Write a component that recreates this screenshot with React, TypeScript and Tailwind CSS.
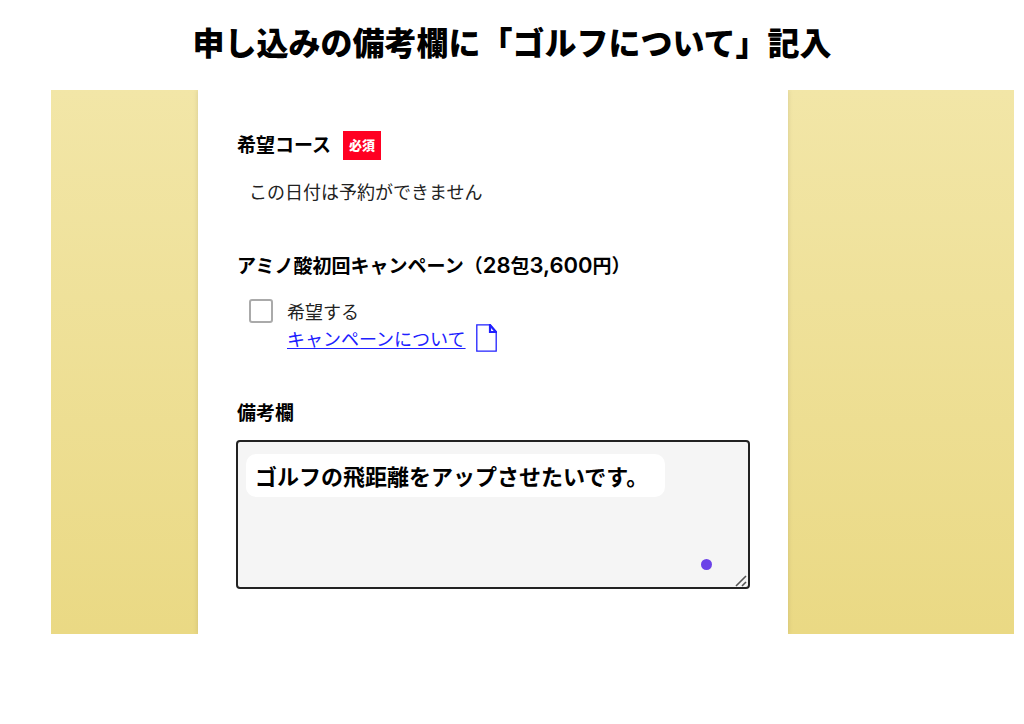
import { useState } from "react";

export default function App() {
  const [wantsCampaign, setWantsCampaign] = useState(false);
  const [remarks, setRemarks] = useState("ゴルフの飛距離をアップさせたいです。");

  return (
    <main className="min-h-screen bg-white pt-[22px] pr-[10px] pb-[90px] pl-[51px] font-['Noto_Sans_CJK_JP',sans-serif] text-black">
      <h1 className="mr-[41px] text-center text-[32px] leading-[38px] font-black">
        申し込みの備考欄に「ゴルフについて」記入
      </h1>

      <div className="mt-[30px] grid grid-cols-[147fr_590fr_226fr] overflow-hidden bg-linear-to-b from-[#f2e6a7] to-[#ead984]">
        <form className="col-start-2 bg-white px-[38px] pt-[41px] pb-[45px] shadow-[0_0_5px_rgba(0,0,0,0.12)]">
          {/* Course */}
          <section className="px-px">
            <div className="flex items-start gap-3">
              <h2 className="text-[19px] leading-[26px] font-bold">希望コース</h2>
              <span className="bg-[#ff0022] px-[6px] pb-[2px] text-[13px] leading-[27px] font-black text-white">
                必須
              </span>
            </div>
            <p className="mt-[17px] pl-3 text-[18px] leading-7 text-[#222]">
              この日付は予約ができません
            </p>
          </section>

          {/* Campaign */}
          <section className="mt-[45px] px-px">
            <h2 className="text-[19px] leading-[30px] font-bold whitespace-nowrap">
              アミノ酸初回キャンペーン（
              <span className="font-['Inter',sans-serif] text-[22px] font-semibold">28</span>包
              <span className="font-['Inter',sans-serif] text-[22px] font-semibold">3,600</span>円）
            </h2>
            <div className="mt-[18px] flex gap-[14px] pl-3">
              <input
                id="campaign"
                type="checkbox"
                checked={wantsCampaign}
                onChange={(e) => setWantsCampaign(e.target.checked)}
                className="mt-[1px] h-6 w-6 shrink-0 appearance-none rounded-[3px] border-2 border-[#aaa] bg-white checked:bg-blue-600"
              />
              <div className="text-[18px] leading-[26px]">
                <label htmlFor="campaign" className="block text-[#222]">
                  希望する
                </label>
                <a
                  href="#campaign"
                  className="flex items-center gap-[10px] text-[#2020ff] underline decoration-1 underline-offset-2"
                >
                  キャンペーンについて
                  <svg width="21" height="28" viewBox="0 0 21 28" fill="none" stroke="#2020ff">
                    <path d="M0.8 0.8H14L20.2 8V27.2H0.8Z" strokeWidth="1.3" />
                    <path d="M14 1V8H20Z" strokeWidth="2.2" />
                  </svg>
                </a>
              </div>
            </div>
          </section>

          {/* Remarks */}
          <section className="mt-[45px]">
            <label htmlFor="remarks" className="block px-px text-[19px] leading-[30px] font-bold">
              備考欄
            </label>
            <div className="relative mt-[13px] h-[149px] rounded-[4px] border-2 border-[#222] bg-[#f5f5f5]">
              <span className="absolute top-3 left-2 h-[43px] w-[419px] rounded-[10px] bg-white" />
              <textarea
                id="remarks"
                value={remarks}
                onChange={(e) => setRemarks(e.target.value)}
                className="relative block h-full w-full resize-none bg-transparent px-[17px] pt-[17px] text-[22px] leading-8 font-bold outline-none"
              />
              <span className="absolute right-[36px] bottom-[17px] h-[11px] w-[11px] rounded-full bg-[#6b42e8]" />
              <svg
                className="absolute right-[1px] bottom-0"
                width="12"
                height="12"
                viewBox="0 0 12 12"
                stroke="#555"
                strokeWidth="1.6"
              >
                <path d="M1 11L11 1M7 11L11 7" />
              </svg>
            </div>
          </section>
        </form>
      </div>
    </main>
  );
}
